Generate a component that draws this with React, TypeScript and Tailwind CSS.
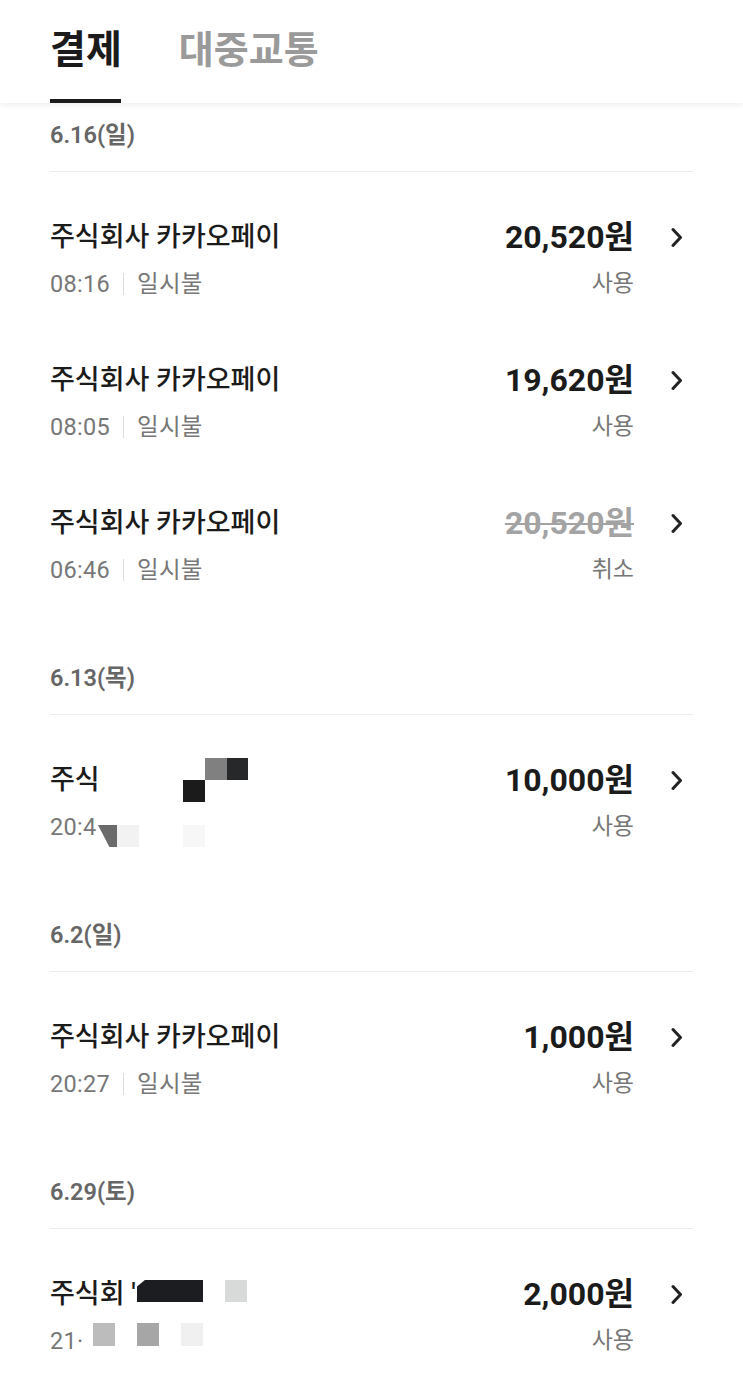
import React from "react";

type Payment = {
  title: string;
  time: string;
  method?: string;
  amount: string;
  status: string;
  canceled?: boolean;
  redact?: "a" | "b";
};

type Section = { date: string; items: Payment[] };

const sections: Section[] = [
  {
    date: "6.16(일)",
    items: [
      { title: "주식회사 카카오페이", time: "08:16", method: "일시불", amount: "20,520원", status: "사용" },
      { title: "주식회사 카카오페이", time: "08:05", method: "일시불", amount: "19,620원", status: "사용" },
      { title: "주식회사 카카오페이", time: "06:46", method: "일시불", amount: "20,520원", status: "취소", canceled: true },
    ],
  },
  {
    date: "6.13(목)",
    items: [{ title: "주식", time: "20:4", amount: "10,000원", status: "사용", redact: "a" }],
  },
  {
    date: "6.2(일)",
    items: [{ title: "주식회사 카카오페이", time: "20:27", method: "일시불", amount: "1,000원", status: "사용" }],
  },
  {
    date: "6.29(토)",
    items: [{ title: "주식회 '", time: "21·", amount: "2,000원", status: "사용", redact: "b" }],
  },
];

const Chevron = () => (
  <svg width="12" height="21" viewBox="0 0 12 21" fill="none">
    <path d="M2 2.5 L9.5 10.5 L2 18.5" stroke="#222" strokeWidth="3" strokeLinecap="round" strokeLinejoin="round" />
  </svg>
);

// mosaic blocks covering private text in the original capture
const RedactA = () => (
  <>
    <div className="absolute left-[155px] top-[-6px] w-[22px] h-[22px] bg-[#808080]" />
    <div className="absolute left-[177px] top-[-6px] w-[21px] h-[22px] bg-[#26282a]" />
    <div className="absolute left-[133px] top-[16px] w-[22px] h-[22px] bg-[#1b1b1b]" />
    <div
      className="absolute left-[48px] top-[61px] w-[19px] h-[22px] bg-[#6a6a6a]"
      style={{ clipPath: "polygon(0 0, 100% 0, 100% 100%, 60% 100%)" }}
    />
    <div className="absolute left-[67px] top-[61px] w-[22px] h-[22px] bg-[#f2f2f2]" />
    <div className="absolute left-[133px] top-[61px] w-[22px] h-[22px] bg-[#f7f7f7]" />
  </>
);

const RedactB = () => (
  <>
    <div
      className="absolute left-[87px] top-[2px] w-[66px] h-[22px] bg-[#1c1d20]"
      style={{ clipPath: "polygon(12% 0, 100% 0, 100% 100%, 0 100%, 0 30%)" }}
    />
    <div className="absolute left-[175px] top-[2px] w-[22px] h-[22px] bg-[#d8d9d9]" />
    <div className="absolute left-[43px] top-[45px] w-[22px] h-[23px] bg-[#bcbcbc]" />
    <div className="absolute left-[87px] top-[45px] w-[22px] h-[23px] bg-[#a6a6a6]" />
    <div className="absolute left-[131px] top-[45px] w-[22px] h-[23px] bg-[#f0f0f0]" />
  </>
);

const Row = ({ p }: { p: Payment }) => (
  <div className="flex items-start pt-[49px] pb-[17px]">
    <div className="relative flex-1 flex flex-col">
      <div className="text-[27px] leading-[32px] font-medium text-[#1b1b1b]">{p.title}</div>
      <div className="mt-[17px] flex items-center text-[23.5px] leading-[28px] tracking-[0.3px] text-[#777]">
        <span>{p.time}</span>
        {p.method && (
          <>
            <span className="mx-[13px] w-px h-[22px] bg-[#dcdcdc]" />
            <span>{p.method}</span>
          </>
        )}
      </div>
      {p.redact === "a" && <RedactA />}
      {p.redact === "b" && <RedactB />}
    </div>
    <div className="flex flex-col items-end">
      <div
        className={
          p.canceled
            ? "text-[32px] leading-[32px] font-bold text-[#a3a3a3] line-through decoration-2"
            : "text-[32px] leading-[32px] font-bold text-[#1b1b1b]"
        }
      >
        {p.amount}
      </div>
      <div className="mt-[17px] text-[23px] leading-[28px] text-[#777]">{p.status}</div>
    </div>
    <div className="ml-[37px] mr-[10px] h-[32px] flex items-center">
      <Chevron />
    </div>
  </div>
);

export default function App() {
  return (
    <div className="min-h-[1389px] bg-white font-['Roboto','Noto_Sans_CJK_KR',sans-serif]">
      <div className="relative z-10 h-[103px] bg-white shadow-[0_2px_5px_rgba(0,0,0,0.07)] flex gap-[57px] px-[50px]">
        <div className="flex flex-col h-full">
          <div className="pt-[27px] text-[39px] leading-[46px] font-bold text-[#1b1b1b]">결제</div>
          <div className="mt-auto w-[71px] h-[4px] bg-[#1b1b1b]" />
        </div>
        <div className="pt-[27px] text-[38px] leading-[46px] font-bold text-[#9a9a9a]">대중교통</div>
      </div>
      <div className="px-[50px]">
        {sections.map((s, i) => (
          <div key={i} className={i === 0 ? "pt-[18px]" : "pt-[63px]"}>
            <div className="text-[23.5px] leading-[28px] font-semibold text-[#666]">{s.date}</div>
            <div className="mt-[22px] h-px bg-[#ececec]" />
            {s.items.map((p, j) => (
              <Row key={j} p={p} />
            ))}
          </div>
        ))}
      </div>
    </div>
  );
}
